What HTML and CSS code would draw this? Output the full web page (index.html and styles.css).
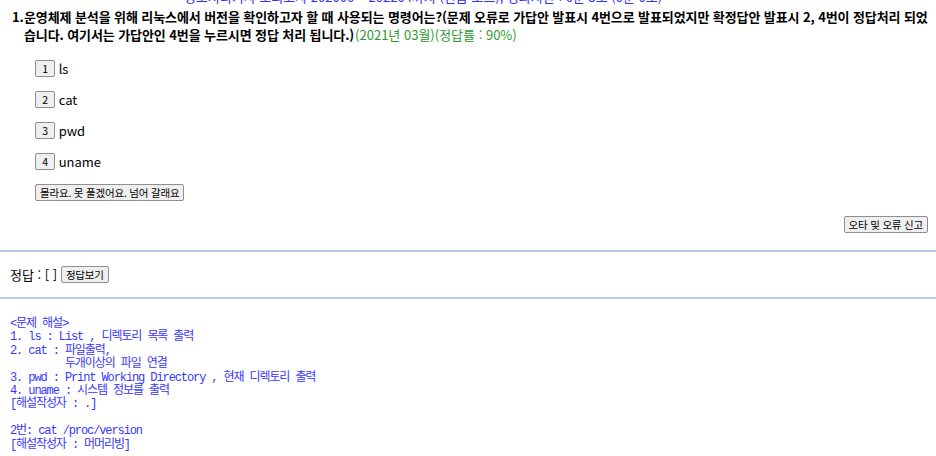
FILE: index.html
```html
<!DOCTYPE html>
<html lang="ko">
<head>
    <meta charset="UTF-8">
    <meta name="viewport" content="width=device-width, initial-scale=1.0">
    <title>정보처리기사 모의고사</title>
    <link rel="stylesheet" href="styles.css">
</head>
<body>
    <!-- 시험 정보 -->
    <div class="exam-title">정보처리기사 모의고사 202006 ~ 202204까지 (연습 모드), 경과시간 : 0분 3초 (0분 0초)</div>

    <div class="question">
        <span class="q-num">1.</span>
        <span class="q-text">운영체제 분석을 위해 리눅스에서 버전을 확인하고자 할 때 사용되는 명령어는?(문제 오류로 가답안 발표시 4번으로 발표되었지만 확정답안 발표시 2, 4번이 정답처리 되었습니다. 여기서는 가답안인 4번을 누르시면 정답 처리 됩니다.)<span class="q-info">(2021년 03월)(정답률 : 90%)</span></span>
    </div>

    <div class="choices">
        <div class="choice"><button class="btn num">1</button> ls</div>
        <div class="choice"><button class="btn num">2</button> cat</div>
        <div class="choice"><button class="btn num">3</button> pwd</div>
        <div class="choice"><button class="btn num">4</button> uname</div>
        <div class="choice"><button class="btn">몰라요. 못 풀겠어요. 넘어 갈래요</button></div>
    </div>

    <div class="report-row"><button class="btn">오타 및 오류 신고</button></div>

    <hr class="line">
    <div class="answer">정답 : [ ] <button class="btn">정답보기</button></div>
    <hr class="line">

    <!-- 해설 -->
    <pre class="explain">&lt;문제 해설&gt;
1. ls : List , 디렉토리 목록 출력
2. cat : 파일출력,
         두개이상의 파일 연결
3. pwd : Print Working Directory , 현재 디렉토리 출력
4. uname : 시스템 정보를 출력
[해설작성자 : .]

2번: cat /proc/version
[해설작성자 : 머머리빙]</pre>
</body>
</html>
```

FILE: styles.css
```css
body {
    margin: 0;
    font-family: "Noto Sans CJK KR", "Open Sans", sans-serif;
    font-size: 13px;
    color: #000;
    background: #fff;
    overflow: hidden;
}

/* 위쪽 제목 - 스크롤 되어 잘려 보임 */
.exam-title {
    height: 6px;
    overflow: hidden;
    padding-right: 90px;
    text-align: center;
    color: #3333ff;
    line-height: 18px;
}
.exam-title::before {
    content: "";
    display: block;
    margin-top: -12px;
}

.question {
    display: flex;
    margin-top: 2px;
    padding: 0 4px 0 12px;
    font-weight: bold;
    line-height: 18px;
    letter-spacing: -0.1px;
}
.q-num {
    width: 12px;
    flex-shrink: 0;
}
.q-info {
    padding-left: 1px;
    font-weight: normal;
    letter-spacing: 0;
    color: #2e9a2e;
}

.choices {
    margin: 16px 0 0 35px;
}
.choice {
    height: 17px;
    line-height: 17px;
    margin-bottom: 14px;
}
.choice:last-child {
    margin-bottom: 0;
}

.btn {
    font-family: "Noto Sans CJK KR", sans-serif;
    font-size: 10.5px;
    line-height: 13px;
    height: 17px;
    padding: 0 4px;
    margin: 0;
    background-color: #efefef;
    border: 1px solid #8f8f8f;
    border-radius: 2px;
    color: #000;
    vertical-align: top;
    letter-spacing: -0.2px;
}
.btn.num {
    width: 20px;
    padding: 0;
}

.report-row {
    text-align: right;
    padding-right: 8px;
    margin-top: 15px;
}

.line {
    margin: 15px 0 0;
    border: none;
    border-top: 2px solid #b9cde6;
    height: 0;
}

.answer {
    padding-left: 10px;
    margin-top: 14px;
    line-height: 17px;
    height: 17px;
}
.answer + .line {
    margin-top: 14px;
}

.explain {
    margin: 19px 0 0 10px;
    font-family: "Liberation Mono", "Noto Sans CJK KR", monospace;
    font-size: 12px;
    letter-spacing: -1.1px;
    line-height: 13.4px;
    color: #3737ff;
}
```
